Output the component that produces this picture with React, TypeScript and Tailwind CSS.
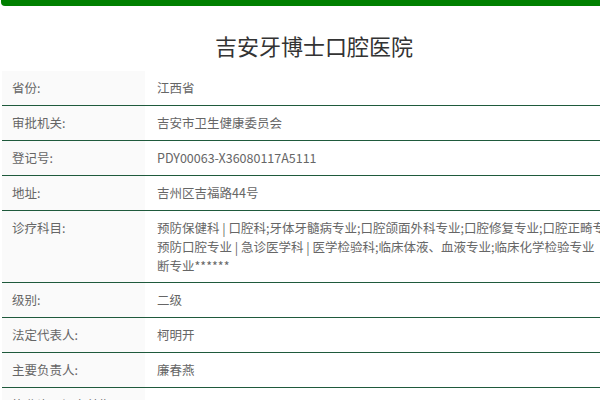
import React from "react";

const rows: { label: string; value: React.ReactNode; multi?: boolean }[] = [
  { label: "省份:", value: "江西省" },
  { label: "审批机关:", value: "吉安市卫生健康委员会" },
  { label: "登记号:", value: "PDY00063-X36080117A5111" },
  { label: "地址:", value: "吉州区吉福路44号" },
  {
    label: "诊疗科目:",
    multi: true,
    value: (
      <>
        <div className="whitespace-nowrap">预防保健科 | 口腔科;牙体牙髓病专业;口腔颌面外科专业;口腔修复专业;口腔正畸专业;</div>
        <div className="whitespace-nowrap">预防口腔专业 | 急诊医学科 | 医学检验科;临床体液、血液专业;临床化学检验专业</div>
        <div className="whitespace-nowrap">断专业******</div>
      </>
    ),
  },
  { label: "级别:", value: "二级" },
  { label: "法定代表人:", value: "柯明开" },
  { label: "主要负责人:", value: "廉春燕" },
  { label: "执业许可证有效期:", value: "2020/08/11 至 2030/08/11" },
];

export default function App() {
  return (
    <div
      className="w-[600px] h-[400px] overflow-hidden bg-white"
      style={{ fontFamily: '"Noto Sans CJK SC", "Noto Sans", sans-serif' }}
    >
      <div className="w-[640px]">
        <div className="h-[6px] bg-[#008000] rounded-bl-[4px] ml-[1px]" />
        <div className="ml-[2px] w-[624px]">
          <div className="pt-[24px] pb-[11px] text-center text-[22px] leading-[30px] text-[#333]">
            吉安牙博士口腔医院
          </div>
          {rows.map((r, i) => (
            <div key={i} className="flex border-b border-[#1f5a3c]">
              <div className="w-[143px] shrink-0 bg-[#fafafa] pl-[10px] py-[7px] text-[12.5px] leading-[20px] text-[#666]">
                {r.label}
              </div>
              <div
                className={
                  r.multi
                    ? "flex-1 pl-[12px] py-[7px] text-[12.5px] leading-[19px] text-[#666] overflow-hidden"
                    : "flex-1 pl-[12px] py-[7px] text-[12.5px] leading-[20px] text-[#666] overflow-hidden"
                }
              >
                {r.value}
              </div>
            </div>
          ))}
        </div>
      </div>
    </div>
  );
}
